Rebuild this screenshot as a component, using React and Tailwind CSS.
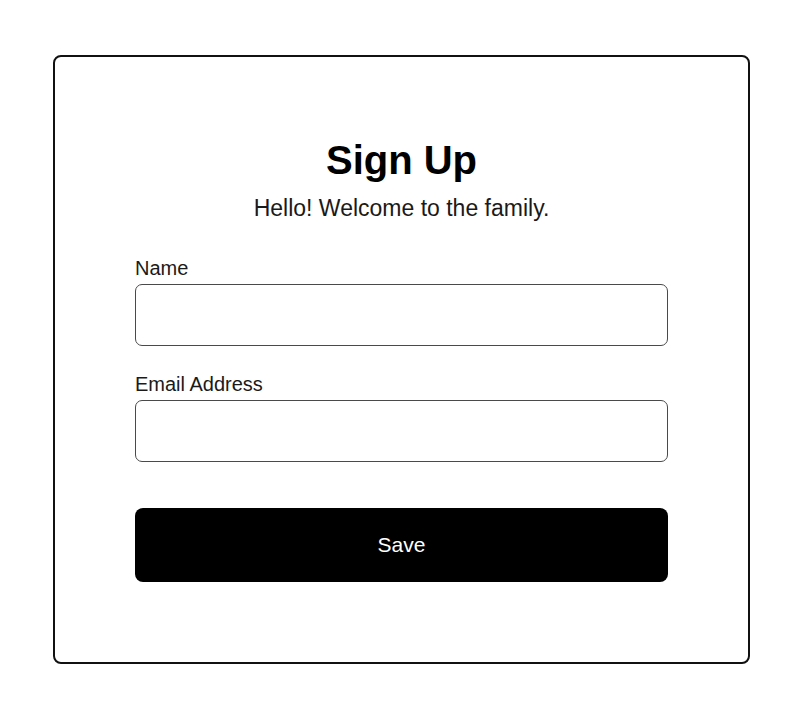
import React, { useState } from "react";

const Field = ({ label, value, onChange, type = "text", className = "" }) => (
  <div className={`flex flex-col ${className}`}>
    <label className="text-[20px] leading-[23px] text-[#1a1a1a] mb-[4px]">{label}</label>
    <input
      type={type}
      value={value}
      onChange={(e) => onChange(e.target.value)}
      className="h-[62px] w-full rounded-[7px] border border-[#4a4a4a] bg-white px-4 text-[19px] outline-none"
    />
  </div>
);

const App = () => {
  const [name, setName] = useState("");
  const [email, setEmail] = useState("");

  return (
    <div
      className="min-h-screen bg-white pt-[55px] pl-[53px]"
      style={{ fontFamily: '"Liberation Sans", Arial, sans-serif' }}
    >
      <div className="w-[697px] rounded-[8px] border-2 border-[#111111] bg-white p-[80px]">
        <div className="flex flex-col items-center">
          <h1 className="text-[40px] leading-[46px] font-bold text-black">Sign Up</h1>
          <p className="mt-[12px] text-[23px] leading-[26px] text-[#1a1a1a]">
            Hello! Welcome to the family.
          </p>
        </div>

        <form onSubmit={(e) => e.preventDefault()}>
          <Field label="Name" value={name} onChange={setName} className="mt-[36px]" />
          <Field
            label="Email Address"
            type="email"
            value={email}
            onChange={setEmail}
            className="mt-[27px]"
          />

          {/* Submit */}
          <button
            type="submit"
            className="mt-[46px] flex h-[74px] w-full items-center justify-center rounded-[8px] bg-black text-[21px] text-white"
          >
            Save
          </button>
        </form>
      </div>
    </div>
  );
};

export default App;
